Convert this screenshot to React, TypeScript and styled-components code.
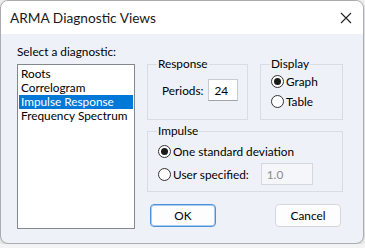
import React from "react";
import styled, { createGlobalStyle } from "styled-components";

const Global = createGlobalStyle`
  html, body { margin: 0; padding: 0; background: #f3f3f3; }
  body { font-family: "Lato", "Open Sans", sans-serif; }
  * { box-sizing: border-box; }
`;

const Window = styled.div`
  width: 364px;
  height: 244px;
  border: 1px solid #a9acb1;
  border-radius: 8px;
  overflow: hidden;
  background: #eef2f8;
  display: flex;
  flex-direction: column;
  box-shadow: 0 1px 4px rgba(0,0,0,0.18);
`;

const TitleBar = styled.div`
  height: 33px;
  background: #ffffff;
  display: flex;
  align-items: center;
  justify-content: space-between;
  padding: 0 10px 0 9px;
  flex-shrink: 0;
`;

const Title = styled.span`
  font-size: 13.7px;
  color: #1a1a1a;
`;

const CloseIcon = styled.svg`
  width: 12px;
  height: 12px;
  margin-right: 1px;
`;

const Body = styled.div`
  flex: 1;
  display: flex;
  padding: 11px 0 0 16px;
  gap: 12px;
  font-size: 11.8px;
  color: #000;
`;

const LeftCol = styled.div`
  display: flex;
  flex-direction: column;
  width: 118px;
`;

const Label = styled.div`
  line-height: 14px;
  height: 19px;
`;

const ListBox = styled.ul`
  margin: 0;
  padding: 2px 1px;
  list-style: none;
  height: 165px;
  background: #fff;
  border: 1px solid #828790;
`;

const ListItem = styled.li<{ $selected?: boolean }>`
  height: 14px;
  line-height: 14px;
  padding-left: 2px;
  white-space: nowrap;
  background: ${(p) => (p.$selected ? "#0078d7" : "transparent")};
  color: ${(p) => (p.$selected ? "#fff" : "#000")};
`;

const RightCol = styled.div`
  display: flex;
  flex-direction: column;
  width: 196px;
  padding-top: 12px;
`;

const TopRow = styled.div`
  display: flex;
  gap: 12px;
`;

const Group = styled.fieldset<{ $w?: number; $h: number; $mt?: number }>`
  margin: ${(p) => p.$mt ?? 0}px 0 0 0;
  ${(p) => (p.$w ? `width: ${p.$w}px;` : "")}
  height: ${(p) => p.$h}px;
  border: 1px solid #d9dce1;
  border-radius: 0;
  padding: 0 0 0 10px;
  display: flex;
  flex-direction: column;
`;

const Legend = styled.legend`
  padding: 0 1px;
  margin-left: -1px;
  line-height: 14px;
`;

const PeriodsRow = styled.label`
  display: flex;
  align-items: center;
  gap: 5px;
  margin-top: 8px;
  padding-left: 4px;
`;

const TextBox = styled.input<{ $w: number; $ml?: number }>`
  width: ${(p) => p.$w}px;
  height: 22px;
  margin-left: ${(p) => p.$ml ?? 0}px;
  border: 1px solid #c8cbd0;
  border-bottom-color: #a0a4aa;
  background: #fff;
  font: inherit;
  padding: 0 5px;
  color: #000;
  outline: none;
  &:disabled {
    background: #f4f6f9;
    color: #8a8d92;
    border-color: #d4d7dc;
  }
`;

const RadioRow = styled.label<{ $mt?: number }>`
  display: flex;
  align-items: center;
  gap: 1px;
  height: 20px;
  margin-top: ${(p) => p.$mt ?? 0}px;
  white-space: nowrap;
`;

const Radio = styled.input.attrs({ type: "radio" })`
  appearance: none;
  margin: 0 1px 0 0;
  width: 13px;
  height: 13px;
  border: 1px solid #333;
  border-radius: 50%;
  background: #fff;
  display: grid;
  place-items: center;
  &:checked::after {
    content: "";
    width: 7px;
    height: 7px;
    border-radius: 50%;
    background: #1a1a1a;
  }
`;

const ButtonRow = styled.div`
  display: flex;
  justify-content: space-between;
  margin-top: 12px;
  padding: 0 2px 0 3px;
`;

const Button = styled.button<{ $default?: boolean }>`
  width: 66px;
  height: 23px;
  border-radius: 4px;
  background: #fdfdfd;
  border: 1px solid ${(p) => (p.$default ? "#4b90d9" : "#d3d6da")};
  box-shadow: ${(p) => (p.$default ? "inset 0 0 0 1px #a9cdf1" : "none")};
  font: inherit;
  color: #000;
  padding: 0;
`;

export default function App() {
  return (
    <>
      <Global />
      <Window>
        <TitleBar>
          <Title>ARMA Diagnostic Views</Title>
          <CloseIcon viewBox="0 0 12 12">
            <path d="M1 1 L11 11 M11 1 L1 11" stroke="#222" strokeWidth="1.1" />
          </CloseIcon>
        </TitleBar>
        <Body>
          <LeftCol>
            <Label>Select a diagnostic:</Label>
            <ListBox>
              <ListItem>Roots</ListItem>
              <ListItem>Correlogram</ListItem>
              <ListItem $selected>Impulse Response</ListItem>
              <ListItem>Frequency Spectrum</ListItem>
            </ListBox>
          </LeftCol>
          <RightCol>
            <TopRow>
              <Group $w={101} $h={63}>
                <Legend>Response</Legend>
                <PeriodsRow>
                  Periods:
                  <TextBox $w={30} defaultValue="24" />
                </PeriodsRow>
              </Group>
              <Group $w={83} $h={63}>
                <Legend>Display</Legend>
                <RadioRow>
                  <Radio name="display" defaultChecked />
                  Graph
                </RadioRow>
                <RadioRow>
                  <Radio name="display" />
                  Table
                </RadioRow>
              </Group>
            </TopRow>
            <Group $h={68} $mt={4}>
              <Legend>Impulse</Legend>
              <RadioRow $mt={3}>
                <Radio name="impulse" defaultChecked />
                One standard deviation
              </RadioRow>
              <RadioRow $mt={3}>
                <Radio name="impulse" />
                User specified:
                <TextBox $w={52} $ml={11} defaultValue="1.0" disabled />
              </RadioRow>
            </Group>
            <ButtonRow>
              <Button $default>OK</Button>
              <Button>Cancel</Button>
            </ButtonRow>
          </RightCol>
        </Body>
      </Window>
    </>
  );
}
